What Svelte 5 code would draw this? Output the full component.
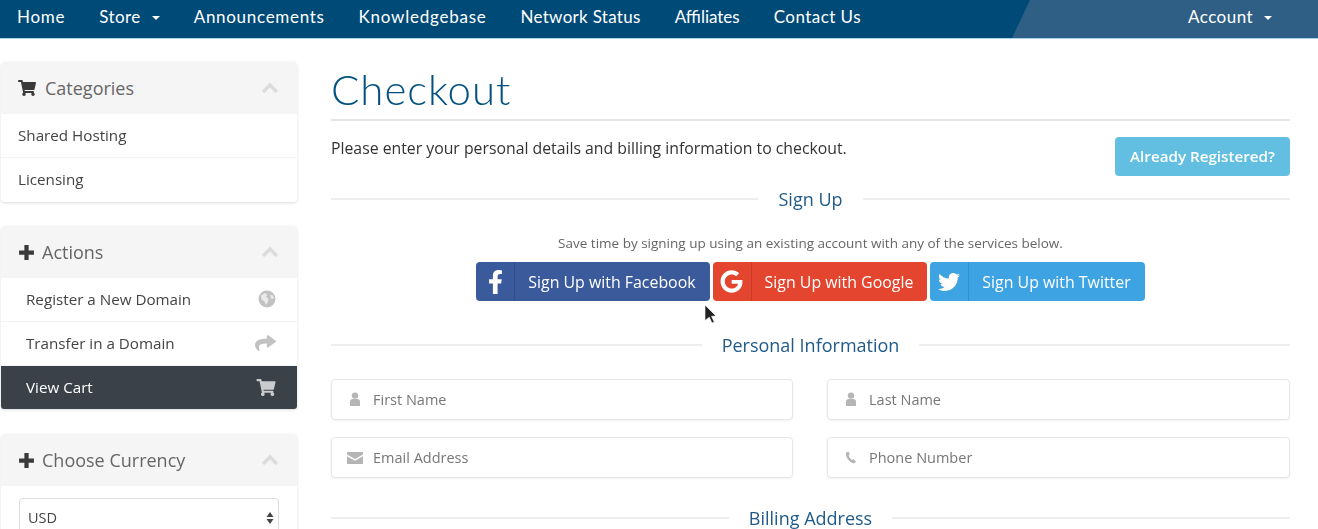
<script>
    // ls: the nav font is a stand-in, so each label is spaced to the width it should have
    const navLeft = [
        { label: 'Home', ls: 0.7 },
        { label: 'Store', ls: 0.45, caret: true },
        { label: 'Announcements', ls: 0.7 },
        { label: 'Knowledgebase', ls: 0.75 },
        { label: 'Network Status', ls: 0.3 },
        { label: 'Affiliates', ls: 0 },
        { label: 'Contact Us', ls: 0.45 }
    ];

    const cart = 'M528.12 301.319l47.273-208C578.806 78.301 567.391 64 551.99 64H159.208l-9.166-44.81C147.758 8.021 137.93 0 126.529 0H24C10.745 0 0 10.745 0 24v16c0 13.255 10.745 24 24 24h69.883l70.248 343.435C147.325 417.1 136 435.222 136 456c0 30.928 25.072 56 56 56s56-25.072 56-56c0-15.674-6.447-29.835-16.824-40h209.647C430.447 426.165 424 440.326 424 456c0 30.928 25.072 56 56 56s56-25.072 56-56c0-22.172-12.888-41.332-31.579-50.405l5.517-24.276c3.413-15.018-8.002-29.319-23.403-29.319H218.117l-6.545-32h293.145c11.206 0 20.92-7.754 23.403-18.681z';
    const share = 'M503.691 189.836L327.687 37.851C312.281 24.546 288 35.347 288 56.015v80.053C127.371 137.907 0 170.1 0 322.326c0 61.441 39.581 122.309 83.333 154.132 13.653 9.931 33.111-2.533 28.077-18.631C66.066 312.814 132.917 274.316 288 272.085V360c0 20.7 24.3 31.453 39.687 18.164l176.004-152c11.071-9.562 11.086-26.753 0-36.328z';
    const fb = 'M279.14 288l14.22-92.66h-88.91v-60.13c0-25.35 12.42-50.06 52.24-50.06h40.42V6.26S260.43 0 225.36 0c-73.22 0-121.08 44.38-121.08 124.72v70.62H22.89V288h81.39v224h100.17V288z';
    const google = 'M488 261.8C488 403.3 391.1 504 248 504 110.8 504 0 393.2 0 256S110.8 8 248 8c66.8 0 123 24.5 166.3 64.9l-67.5 64.9C258.5 52.6 94.3 116.6 94.3 256c0 86.5 69.1 156.6 153.7 156.6 98.2 0 135-70.4 140.8-106.9H248v-85.3h236.1c2.3 12.7 3.9 24.9 3.9 41.4z';
    const twitter = 'M459.37 151.716c.325 4.548.325 9.097.325 13.645 0 138.72-105.583 298.558-298.558 298.558-59.452 0-114.68-17.219-161.137-47.106 8.447.974 16.568 1.299 25.34 1.299 49.055 0 94.213-16.568 130.274-44.832-46.132-.975-84.792-31.188-98.112-72.772 6.498.974 12.995 1.624 19.818 1.624 9.421 0 18.843-1.3 27.614-3.573-48.081-9.747-84.143-51.98-84.143-102.985v-1.299c13.969 7.797 30.214 12.67 47.431 13.319-28.264-18.843-46.781-51.005-46.781-87.391 0-19.492 5.197-37.36 14.294-52.954 51.655 63.675 129.3 105.258 216.365 109.807-1.624-7.797-2.599-15.918-2.599-24.04 0-57.828 46.782-104.934 104.934-104.934 30.213 0 57.502 12.67 76.67 33.137 23.715-4.548 46.456-13.32 66.599-25.34-7.798 24.366-24.366 44.833-46.132 57.827 21.117-2.273 41.584-8.122 60.426-16.243-14.292 20.791-32.161 39.308-52.628 54.253z';

    const socials = [
        { cls: 'fb', label: 'Sign Up with Facebook', path: fb, box: '0 0 320 512', w: 15, h: 24 },
        { cls: 'gg', label: 'Sign Up with Google', path: google, box: '0 0 488 512', w: 23, h: 23 },
        { cls: 'tw', label: 'Sign Up with Twitter', path: twitter, box: '0 0 512 512', w: 22, h: 22 }
    ];
</script>

{#snippet plus()}
    <svg class="head-icon" width="17" height="17" viewBox="0 0 16 16"><path d="M6 1h4v5h5v4h-5v5H6v-5H1V6h5z" fill="#3a3a3a" /></svg>
{/snippet}

{#snippet chevron()}
    <svg class="chev" width="18" height="12" viewBox="0 0 18 12"><path d="M2 10l7-7 7 7" fill="none" stroke="#dcdcdc" stroke-width="3.4" /></svg>
{/snippet}

{#snippet divider(text)}
    <div class="divider"><span>{text}</span></div>
{/snippet}

{#snippet userIcon()}
    <svg width="12" height="15" viewBox="0 0 12 15"><circle cx="6" cy="3.6" r="3.2" fill="#b5b5b5" /><path d="M1 14V9.5C1 7.8 2.4 7 4 7h4c1.600 0 3 .8 3 2.500V14z" fill="#b5b5b5" /></svg>
{/snippet}

<div class="page">
    <nav class="topbar">
        <div class="nav-shade"></div>
        <ul class="nav-list">
            {#each navLeft as item}
                <li style="letter-spacing: {item.ls}px">{item.label}{#if item.caret}<i class="caret"></i>{/if}</li>
            {/each}
        </ul>
        <ul class="nav-list nav-right">
            <li>Account<i class="caret"></i></li>
        </ul>
    </nav>

    <div class="content">
        <aside class="sidebar">
            <section class="panel">
                <header>
                    <svg class="head-icon cart-icon" width="18" height="16" viewBox="0 0 576 512"><path d={cart} fill="#3a3a3a" /></svg>
                    <h3>Categories</h3>
                    {@render chevron()}
                </header>
                <a class="row flush" href="#a">Shared Hosting</a>
                <a class="row flush" href="#a">Licensing</a>
            </section>

            <section class="panel">
                <header>
                    {@render plus()}
                    <h3>Actions</h3>
                    {@render chevron()}
                </header>
                <a class="row" href="#a">
                    Register a New Domain
                    <svg width="18" height="18" viewBox="0 0 18 18"><circle cx="9" cy="9" r="8.500" fill="#c2c2c2" /><path d="M3 5.500l4-2.500 2 1.500-1 2.500 2.500 1.500-.5 3-2 3.500-1.500-3.500L3.500 9.500z" fill="#eaeaea" /><path d="M12 5l3 .5 1 3-2.500.5z" fill="#eaeaea" /></svg>
                </a>
                <a class="row" href="#a">
                    Transfer in a Domain
                    <svg width="21" height="18" viewBox="0 0 512 512" preserveAspectRatio="none"><path d={share} fill="#c2c2c2" /></svg>
                </a>
                <a class="row active" href="#a">
                    View Cart
                    <svg width="20" height="17" viewBox="0 0 576 512"><path d={cart} fill="#c9cbcd" /></svg>
                </a>
            </section>

            <section class="panel">
                <header>
                    {@render plus()}
                    <h3>Choose Currency</h3>
                    {@render chevron()}
                </header>
                <div class="currency">
                    <div class="select-wrap">
                        <select><option>USD</option></select>
                        <svg class="updown" width="8" height="14" viewBox="0 0 8 14"><path d="M4 1l3.500 5H.5zM4 13L.5 8h7z" fill="#444" /></svg>
                    </div>
                </div>
            </section>
        </aside>

        <main class="main">
            <h1>Checkout</h1>
            <div class="intro">
                <p>Please enter your personal details and billing information to checkout.</p>
                <button class="already">Already Registered?</button>
            </div>

            {@render divider('Sign Up')}
            <p class="hint">Save time by signing up using an existing account with any of the services below.</p>
            <div class="socials">
                {#each socials as s}
                    <button class="social {s.cls}">
                        <span class="social-icon"><svg width={s.w} height={s.h} viewBox={s.box}><path d={s.path} fill="#fff" /></svg></span>
                        <span class="social-text">{s.label}</span>
                    </button>
                {/each}
            </div>

            {@render divider('Personal Information')}
            <div class="fields">
                <label class="field">
                    <span class="field-icon">{@render userIcon()}</span>
                    <input placeholder="First Name" />
                </label>
                <label class="field">
                    <span class="field-icon">{@render userIcon()}</span>
                    <input placeholder="Last Name" />
                </label>
                <label class="field">
                    <span class="field-icon"><svg width="16" height="12" viewBox="0 0 16 12"><path d="M0 0h16v2.500L8 7 0 2.500zM0 4.200L8 8.700l8-4.500V12H0z" fill="#b5b5b5" /></svg></span>
                    <input placeholder="Email Address" />
                </label>
                <label class="field">
                    <span class="field-icon"><svg width="12" height="13" viewBox="0 0 12 13"><path d="M3.300.6L1 1.800C.3 5 3.300 11 9 12.600l2-1.900-2.400-2.600-1.500 1C5.300 8 4.200 6.200 3.700 4.300l1.200-1z" fill="#b5b5b5" /></svg></span>
                    <input placeholder="Phone Number" />
                </label>
            </div>

            <div class="billing">{@render divider('Billing Address')}</div>
        </main>
    </div>

    <svg class="cursor" width="14" height="20" viewBox="0 0 14 20"><path d="M1 1l11 11-4.500.3 2.800 5.700-2.300 1-2.700-5.800L1 16.500z" fill="#222" stroke="#fff" stroke-width=".6" /></svg>
</div>

<style>
    :global(body) {
        margin: 0;
        background: #fff;
    }

    .page {
        position: relative;
        height: 529px;
        overflow: hidden;
        font-family: "Open Sans", sans-serif;
        color: #333;
        filter: blur(0.35px);
    }

    .topbar {
        position: relative;
        display: flex;
        justify-content: space-between;
        height: 38px;
        background: #004a78;
        border-bottom: 1px solid #a9cfe4;
    }

    .nav-shade {
        position: absolute;
        top: 0;
        bottom: 0;
        right: 0;
        width: 306px;
        background: #2f5f85;
        clip-path: polygon(18px 0, 100% 0, 100% 100%, 0 100%);
    }

    .nav-list {
        position: relative;
        display: flex;
        margin: 0;
        padding: 0;
        list-style: none;
    }

    .nav-list li {
        padding: 0 17px;
        line-height: 34px;
        font-family: Lato, sans-serif;
        font-size: 17px;
        letter-spacing: 0.45px;
        color: #fff;
        white-space: nowrap;
    }

    .nav-right li {
        padding-right: 46px;
    }

    .caret {
        display: inline-block;
        margin-left: 11px;
        vertical-align: 3px;
        border-top: 4px solid #fff;
        border-left: 4.500px solid transparent;
        border-right: 4.500px solid transparent;
    }

    .content {
        display: flex;
        gap: 34px;
        padding: 23px 28px 0 1px;
    }

    .sidebar {
        flex: 0 0 296px;
        display: flex;
        flex-direction: column;
        gap: 24px;
    }

    .panel {
        border-radius: 4px;
        background: #fff;
        box-shadow: 0 1px 3px rgba(0, 0, 0, 0.14);
    }

    .panel:last-child {
        margin-top: 1px;
    }

    .panel header {
        display: flex;
        align-items: center;
        height: 52px;
        padding: 0 18px 0 17px;
        background: #f5f5f5;
        border-radius: 4px 4px 0 0;
    }

    .head-icon {
        margin-right: 7px;
    }

    .cart-icon {
        margin-right: 9px;
    }

    .panel h3 {
        flex: 1;
        margin: 0;
        font-size: 18px;
        font-weight: 400;
        color: #666;
    }

    .row {
        display: flex;
        align-items: center;
        justify-content: space-between;
        height: 44px;
        box-sizing: border-box;
        padding: 0 21px 2px 25px;
        border-bottom: 1px solid #f3f3f3;
        font-size: 15.200px;
        color: #444;
        text-decoration: none;
    }

    .row.flush {
        padding-left: 17px;
    }

    .row:last-child {
        border-bottom: 1px solid transparent;
    }

    .row.active {
        height: 43px;
        padding-bottom: 1px;
        border-bottom: 0;
        background: #3a4148;
        color: #fff;
        border-radius: 0 0 3px 3px;
    }

    .currency {
        padding: 12px 18px;
    }

    .select-wrap {
        position: relative;
    }

    .select-wrap select {
        display: block;
        width: 100%;
        height: 40px;
        padding: 0 8px 2px;
        appearance: none;
        background: #fff;
        border: 1px solid #ddd;
        border-radius: 4px;
        font-family: inherit;
        font-size: 14.500px;
        color: #444;
    }

    .updown {
        position: absolute;
        top: 13px;
        right: 5px;
    }

    .main {
        flex: 1;
        min-width: 0;
    }

    h1 {
        height: 57px;
        margin: 0;
        border-bottom: 2px solid #e5e5e5;
        font-family: Lato, sans-serif;
        font-size: 42px;
        font-weight: 300;
        letter-spacing: 0.95px;
        line-height: 55px;
        color: #00517f;
    }

    .intro {
        display: flex;
        justify-content: space-between;
        align-items: flex-start;
        margin-top: 16px;
    }

    .intro p {
        margin: 1px 0 0;
        font-size: 15.800px;
        line-height: 21px;
        color: #333;
    }

    .already {
        width: 175px;
        height: 39px;
        padding: 0 0 2px;
        border: 0;
        border-radius: 4px;
        background: #63bfe2;
        color: #fff;
        font-family: inherit;
        font-size: 15.200px;
        font-weight: 600;
    }

    .divider {
        display: flex;
        align-items: center;
        gap: 20px;
        font-size: 18px;
        color: #1f5a88;
    }

    .divider::before,
    .divider::after {
        content: '';
        flex: 1;
        height: 2px;
        background: #eee;
    }

    .intro + .divider {
        margin-top: 11px;
    }

    .hint {
        margin: 23px 0 0;
        font-size: 13.500px;
        line-height: 18px;
        color: #666;
        text-align: center;
    }

    .socials {
        display: flex;
        justify-content: center;
        gap: 3px;
        margin: 10px 0 32px;
    }

    .social {
        display: flex;
        align-items: stretch;
        height: 39px;
        padding: 0;
        border: 0;
        border-radius: 4px;
        color: #fff;
        font-family: inherit;
        font-size: 15.900px;
    }

    .social-icon {
        display: flex;
        align-items: center;
        justify-content: center;
        width: 38px;
        border-right: 1px solid rgba(0, 0, 0, 0.12);
    }

    .social-text {
        align-self: center;
        padding: 0 14px 0 13px;
        white-space: nowrap;
    }

    .fb { background: #3a5a9b; }
    .gg { background: #e3452f; }
    .tw { background: #3ea3e3; }

    .fields {
        display: grid;
        grid-template-columns: 462px 463px;
        justify-content: space-between;
        row-gap: 17px;
        margin-top: 22px;
    }

    .field {
        position: relative;
        display: block;
    }

    .field-icon {
        position: absolute;
        left: 15px;
        top: 0;
        bottom: 0;
        width: 18px;
        display: flex;
        align-items: center;
        justify-content: center;
    }

    .field input {
        display: block;
        width: 100%;
        height: 41px;
        box-sizing: border-box;
        padding: 0 12px 1px 41px;
        border: 1px solid #e6e6e6;
        border-radius: 4px;
        box-shadow: 0 1px 2px rgba(0, 0, 0, 0.05);
        font-family: inherit;
        font-size: 14.500px;
        outline: none;
    }

    .field input::placeholder {
        color: #777;
        opacity: 1;
    }

    .billing {
        margin-top: 28px;
    }

    .cursor {
        position: absolute;
        left: 704px;
        top: 304px;
    }
</style>
